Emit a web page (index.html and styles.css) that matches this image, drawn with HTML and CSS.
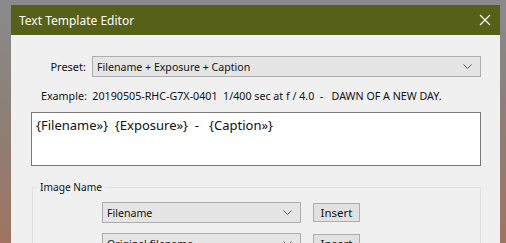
FILE: index.html
```html
<!DOCTYPE html>
<html lang="en">
<head>
  <meta charset="UTF-8">
  <title>Text Template Editor</title>
  <link rel="stylesheet" href="styles.css">
</head>
<body>

  <div class="desk">
    <div class="dialog">
      <div class="titlebar">
        <span class="title">Text Template Editor</span>
        <svg class="close" width="12" height="12" viewBox="0 0 12 12">
          <path d="M1 1 L11 11 M11 1 L1 11" stroke="#f4f4e8" stroke-width="1.3" fill="none"/>
        </svg>
      </div>

      <div class="content">
        <div class="preset-row">
          <span class="label">Preset:</span>
          <div class="combo wide">
            <span>Filename + Exposure + Caption</span>
            <svg class="chev" width="9" height="5" viewBox="0 0 9 5"><path d="M0.5 0.5 L4.5 4.5 L8.5 0.5" stroke="#555" fill="none"/></svg>
          </div>
        </div>

        <div class="example">Example:&nbsp; 20190505-RHC-G7X-0401&nbsp; 1/400 sec at f / 4.0&nbsp; -&nbsp;&nbsp; DAWN OF A NEW DAY.</div>

        <div class="template">{Filename»}&nbsp; {Exposure»}&nbsp; -&nbsp;&nbsp; {Caption»}</div>

        <div class="group">
          <span class="legend">Image Name</span>
          <div class="token-row">
            <div class="combo small">
              <span>Filename</span>
              <svg class="chev" width="9" height="5" viewBox="0 0 9 5"><path d="M0.5 0.5 L4.5 4.5 L8.5 0.5" stroke="#555" fill="none"/></svg>
            </div>
            <button class="insert">Insert</button>
          </div>
          <div class="token-row">
            <div class="combo small">
              <span>Original filename</span>
              <svg class="chev" width="9" height="5" viewBox="0 0 9 5"><path d="M0.5 0.5 L4.5 4.5 L8.5 0.5" stroke="#555" fill="none"/></svg>
            </div>
            <button class="insert">Insert</button>
          </div>
        </div>
      </div>
    </div>
  </div>

</body>
</html>
```

FILE: styles.css
```css
body {
  margin: 0;
  font-family: 'Noto Sans', 'DejaVu Sans', sans-serif;
  overflow: hidden;
  background: #7a6a60;
}

.desk {
  height: 243px;
  padding: 5px 6px 0 11px;
  background: linear-gradient(180deg, #8a8a8c 0%, #8c8078 45%, #a07462 100%);
  overflow: hidden;
}

.dialog {
  width: 489px;
  height: 300px;
  background-color: #f0f0f0;
}

.titlebar {
  height: 30px;
  background-color: #566018;
  display: flex;
  align-items: center;
  justify-content: space-between;
  padding: 0 9px 0 8px;
}

.title {
  color: #ffffff;
  font-size: 12px;
}

.close {
  display: block;
}

.content {
  padding: 21px 19px 0 20px;
  font-size: 10.7px;
  color: #111;
}

.preset-row {
  display: flex;
  align-items: center;
  gap: 6px;
}

.label {
  width: 55px;
  text-align: right;
  font-size: 11px;
}

.combo {
  height: 21px;
  box-sizing: border-box;
  border: 1px solid #adadad;
  background-color: #e5e5e5;
  display: flex;
  align-items: center;
  justify-content: space-between;
  padding: 0 8px 0 4px;
  font-size: 10.6px;
}

.wide {
  flex: 1;
}

.chev {
  display: block;
}

.example {
  margin: 12px 0 0 10px;
  height: 14px;
  line-height: 14px;
}

.template {
  margin-top: 9px;
  height: 54px;
  box-sizing: border-box;
  border: 1px solid #7a7a7a;
  background-color: #ffffff;
  padding: 3px 4px;
  font-size: 13px;
}

.group {
  position: relative;
  margin: 21px 0 0 1px;
  border: 1px solid #e0e0e0;
  padding: 14px 0 0 69px;
  height: 80px;
}

.legend {
  position: absolute;
  top: -8px;
  left: 4px;
  padding: 0 3px;
  background-color: #f0f0f0;
  font-size: 10.2px;
}

.token-row {
  display: flex;
  align-items: center;
  gap: 12px;
  margin-bottom: 10px;
}

.small {
  width: 199px;
}

.insert {
  width: 47px;
  height: 19px;
  border: 1px solid #adadad;
  background-color: #e1e1e1;
  font-family: inherit;
  font-size: 11.5px;
  color: #111;
  padding: 0;
}
```
